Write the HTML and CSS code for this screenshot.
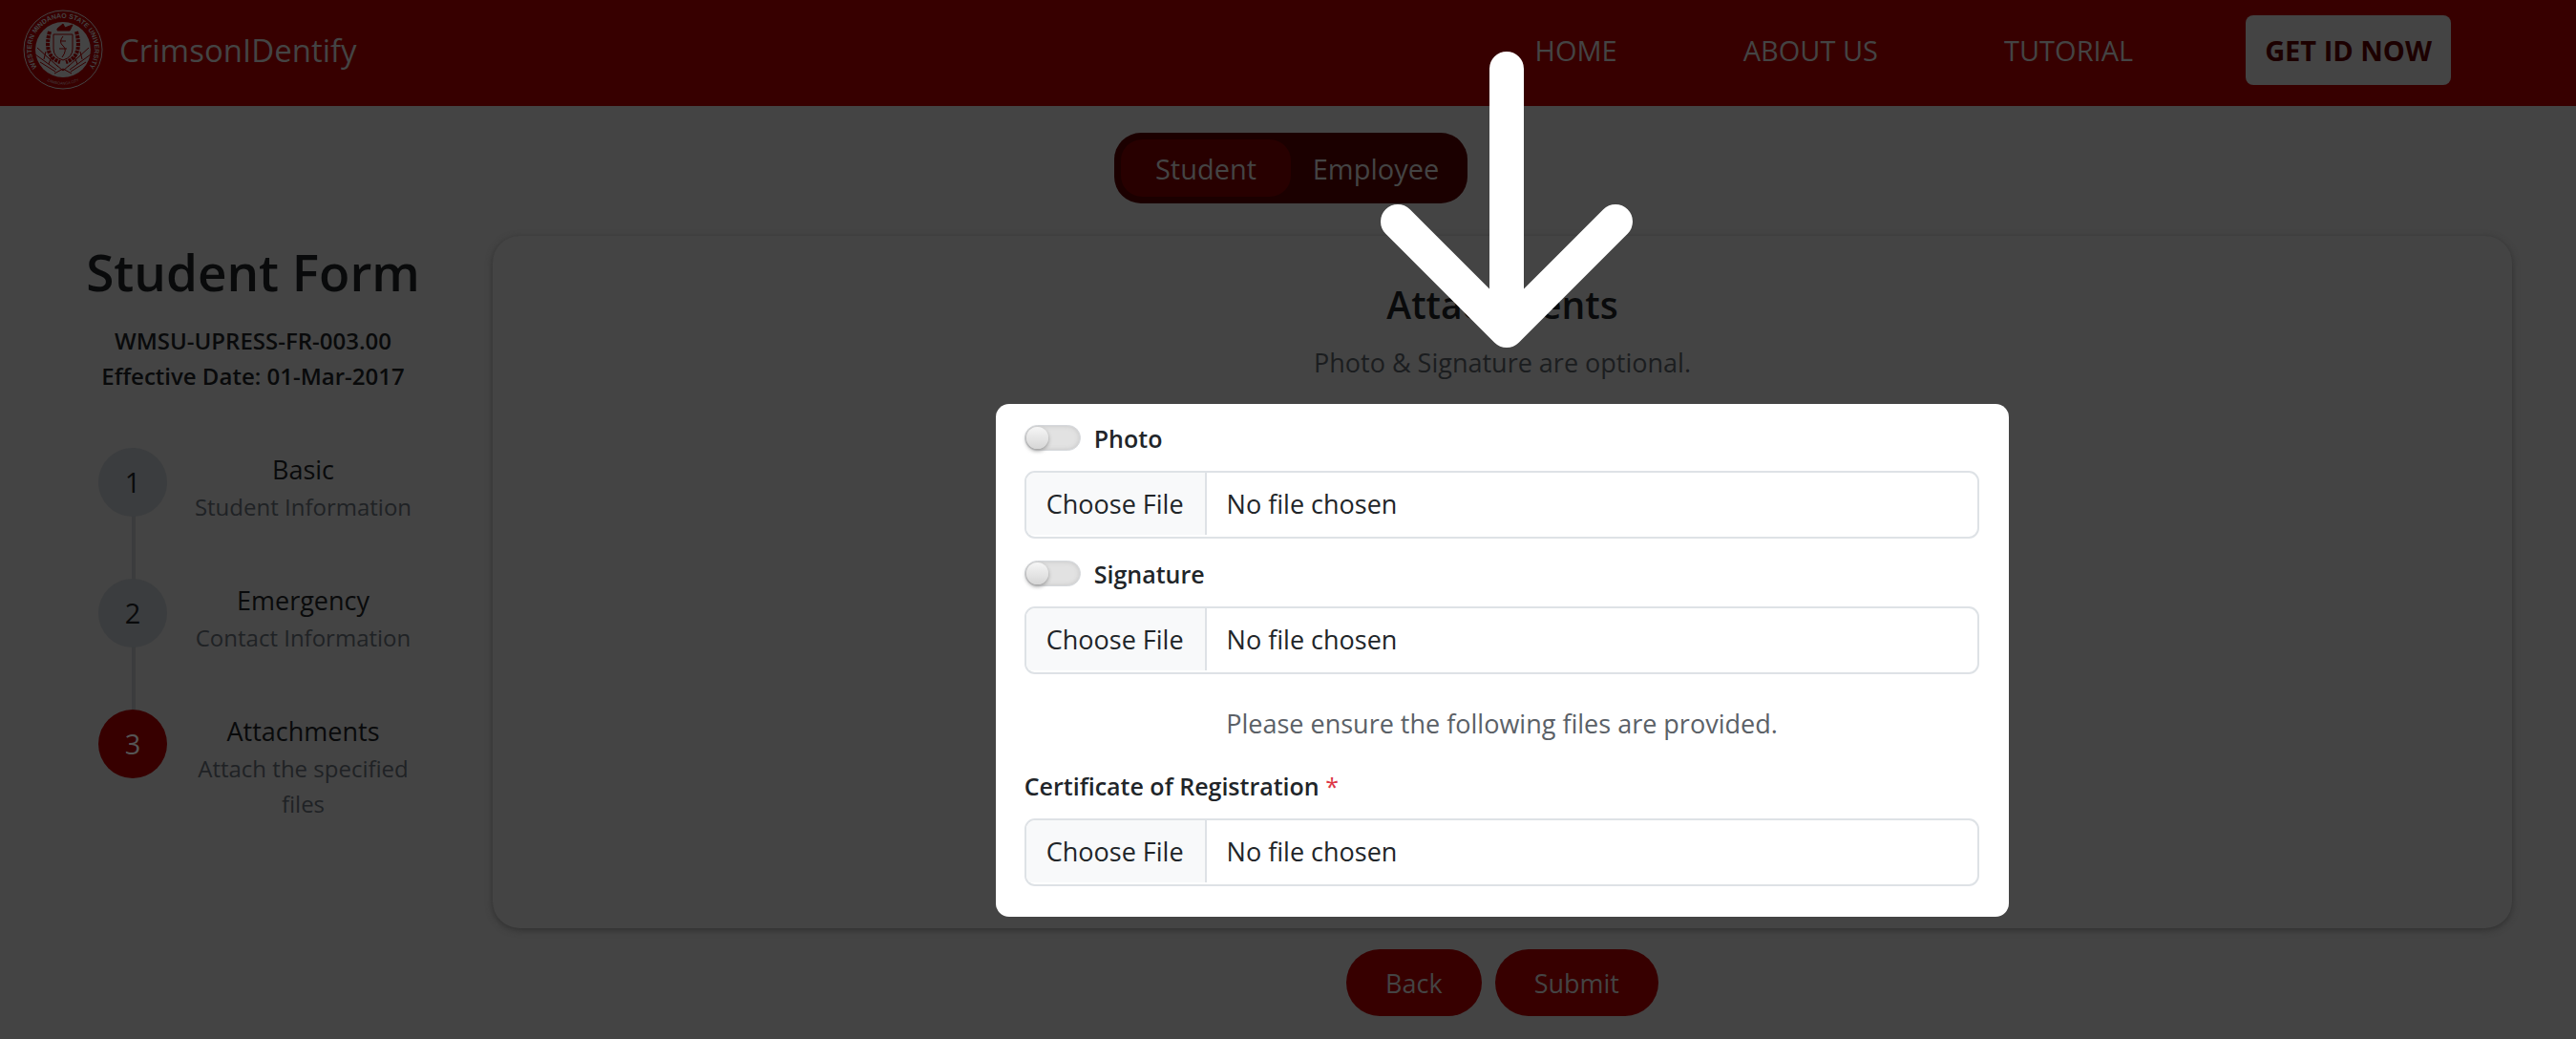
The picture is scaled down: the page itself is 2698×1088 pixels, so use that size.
FILE: index.html
```html
<!DOCTYPE html>
<html lang="en">
<head>
<meta charset="utf-8">
<meta name="viewport" content="width=device-width, initial-scale=1">
<title>CrimsonIDentify</title>
<link rel="stylesheet" href="styles.css">
</head>
<body>
<header class="navbar">
  <a class="brand" href="#">
    <svg class="seal" viewBox="0 0 84 84" aria-hidden="true">
      <defs>
        <path id="ring-top" d="M22 68A33 33 0 1 1 62 68"/>
        <path id="ring-bottom" d="M22 73A38 38 0 0 0 62 73"/>
      </defs>
      <circle class="seal-line" cx="42" cy="42" r="41"/>
      <circle class="seal-fill" cx="42" cy="42" r="29"/>
      <text class="seal-text"><textPath href="#ring-top" startOffset="50%">WESTERN MINDANAO STATE UNIVERSITY</textPath></text>
      <text class="seal-small"><textPath href="#ring-bottom" startOffset="50%">ZAMBOANGA CITY</textPath></text>
      <g class="seal-ink">
        <path d="M36 20l6-5 2 4 8-3-3 6H36z"/>
        <path d="M32 26h20v15q0 9-10 12-10-3-10-12z" fill="none"/>
        <path d="M42 28q-5 6 0 10t-1 12M39 33h6M38 41h8" fill="none"/>
        <path class="wreath" d="M28 23q-7 26 11 32M56 23q7 26-11 32" fill="none"/>
        <path d="M15 40l22 20M13 47l22 16M18 55l16 10M69 40l-22 20M71 47l-22 16M66 55l-16 10M24 44l-2 8M30 49l-3 8M60 44l2 8M54 49l3 8M35 58l7 6 7-6M33 67l9-5 9 5" fill="none"/>
      </g>
    </svg>
    <span>CrimsonIDentify</span>
  </a>
  <nav class="menu">
    <a href="#">HOME</a>
    <a href="#">ABOUT US</a>
    <a href="#">TUTORIAL</a>
    <a class="cta" href="#">GET ID NOW</a>
  </nav>
</header>

<div class="switcher">
  <button class="tab tab-active" type="button">Student</button>
  <button class="tab" type="button">Employee</button>
</div>

<div class="layout">
  <aside class="sidebar">
    <h1>Student Form</h1>
    <p class="form-code">WMSU-UPRESS-FR-003.00<br>Effective Date: 01-Mar-2017</p>
    <ol class="steps">
      <li class="step"><span class="dot">1</span><div class="step-text"><h2>Basic</h2><p>Student Information</p></div></li>
      <li class="step"><span class="dot">2</span><div class="step-text"><h2>Emergency</h2><p>Contact Information</p></div></li>
      <li class="step step-active"><span class="dot">3</span><div class="step-text"><h2>Attachments</h2><p>Attach the specified files</p></div></li>
    </ol>
  </aside>
  <form class="main">
    <section class="card">
      <svg class="pointer" viewBox="0 0 264 310" aria-hidden="true"><path d="M132 18V292M18 178L132 292L246 178"/></svg>
      <h2 class="card-title">Attachments</h2>
      <p class="card-note">Photo &amp; Signature are optional.</p>
      <div class="panel">
        <div class="label-row"><input class="toggle" type="checkbox" id="has-photo"><label for="has-photo">Photo</label></div>
        <input class="file" type="file" aria-label="Photo file">
        <div class="label-row"><input class="toggle" type="checkbox" id="has-signature"><label for="has-signature">Signature</label></div>
        <input class="file" type="file" aria-label="Signature file">
        <p class="panel-note">Please ensure the following files are provided.</p>
        <div class="label-row"><label for="cor">Certificate of Registration <span class="required">*</span></label></div>
        <input class="file" type="file" id="cor">
      </div>
    </section>
    <div class="actions">
      <button class="action" type="button">Back</button>
      <button class="action" type="submit">Submit</button>
    </div>
  </form>
</div>
</body>
</html>
```
FILE: styles.css
```css
* { box-sizing: border-box; }

body {
  margin: 0;
  background: #444;
  color: #090a0b;
  font-family: "Open Sans", "Noto Sans", sans-serif;
  font-size: 27px;
}

h1, h2, p, ol { margin: 0; padding: 0; font-weight: 400; }
button, input { font: inherit; }
a { color: inherit; text-decoration: none; }

.navbar {
  display: flex;
  align-items: center;
  justify-content: space-between;
  height: 111px;
  padding: 0 131px 7px 24px;
  background: #370000;
  color: #444;
}
.brand { display: flex; align-items: center; gap: 17px; font-size: 33px; }
.seal { width: 84px; height: 84px; }
.seal-line { fill: none; stroke: #444; stroke-width: 1; }
.seal-fill { fill: #444; }
.seal-text { fill: #444; font-family: "Liberation Sans", sans-serif; font-size: 7px; font-weight: 700; text-anchor: middle; }
.seal-small { fill: #444; font-size: 4px; text-anchor: middle; }
.seal-ink { fill: #370000; stroke: #370000; stroke-width: 1; }
.wreath { stroke-width: 4; stroke-dasharray: 3 1; }
.menu { display: flex; align-items: center; gap: 132px; font-size: 29px; }
.cta {
  margin-left: -14px;
  padding: 14px 20px;
  border-radius: 8px;
  background: #444;
  color: #1c0000;
  font-weight: 700;
  line-height: 45px;
}

.switcher {
  display: flex;
  width: 370px;
  height: 74px;
  margin: 28px auto 34px calc(50% - 182px);
  padding: 7px;
  border-radius: 28px;
  background: #1b0000;
}
.tab {
  flex: 1;
  padding: 0;
  border: 0;
  border-radius: 22px;
  background: none;
  color: #444;
  font-size: 29px;
}
.tab-active { background: #280000; }

.layout { display: grid; grid-template-columns: 516px 1fr; padding-right: 67px; }

.sidebar { padding: 0 82px 0 96px; text-align: center; }
.sidebar h1 { margin: 0 -20px; font-size: 53px; font-weight: 600; line-height: 76px; }
.form-code { margin-top: 15px; font-size: 24px; font-weight: 600; line-height: 37px; white-space: nowrap; }
.steps { margin-top: 57px; list-style: none; }
.step { display: flex; gap: 26px; height: 137px; padding-left: 7px; background: linear-gradient(#3b3c3d, #3b3c3d) 42px 0 / 4px 100% no-repeat; }
.step-active { background: none; }
.dot {
  flex: none;
  width: 72px;
  height: 72px;
  border-radius: 50%;
  background: #3b3d3f;
  font-size: 29px;
  line-height: 72px;
}
.step-active .dot { background: #370000; color: #555; }
.step-text { flex: 1; padding-top: 3px; }
.step h2 { font-size: 27px; line-height: 40px; }
.step p { color: #1f2225; font-size: 24px; line-height: 37px; }

.card {
  position: relative;
  display: flex;
  flex-direction: column;
  align-items: center;
  padding: 44px 0 12px;
  border-radius: 28px;
  background: #444;
  box-shadow: 0 2px 7px #303030;
}
.card-title { font-size: 39px; font-weight: 600; line-height: 56px; }
.card-note { margin: 12px 0 22px; color: #1b1d1f; line-height: 42px; }
.pointer { position: absolute; top: -193px; left: calc(50% - 128px); width: 264px; height: 310px; }
.pointer path { fill: none; stroke: #fff; stroke-width: 36; stroke-linecap: round; stroke-linejoin: round; }

.panel {
  width: calc(50% + 4px);
  padding: 17px 31px 32px 30px;
  border-radius: 14px;
  background: #fff;
  color: #212529;
}
.label-row { display: flex; align-items: center; gap: 14px; height: 37px; font-size: 25px; font-weight: 600; }
.required { color: #dc3545; font-weight: 400; }
.toggle {
  appearance: none;
  width: 59px;
  height: 27px;
  margin: 0;
  border: 1px solid #d5d8dc;
  border-radius: 14px;
  background: #e2e2e2;
  box-shadow: inset 0 0 5px #c4c4c4;
}
.toggle::before {
  content: "";
  display: block;
  width: 23px;
  height: 23px;
  margin: 1px;
  border-radius: 50%;
  background: linear-gradient(#f6f6f6, #d6d6d6);
  box-shadow: 0 2px 4px #999;
}
.file {
  display: block;
  width: 100%;
  height: 71px;
  margin: 16px 0 18px;
  border: 2px solid #dee2e6;
  border-radius: 11px;
  color: #212529;
  line-height: 42px;
  overflow: hidden;
}
.file::file-selector-button {
  height: 65px;
  margin: 0 21px 0 0;
  padding: 0 22px 0 21px;
  border: 0;
  border-right: 2px solid #dee2e6;
  background: #f8f9fa;
  color: #212529;
  font: inherit;
}
.panel-note { margin: 31px 0 25px; color: #5b6167; line-height: 42px; text-align: center; }
.panel .file:last-child { margin-bottom: 0; }

.actions { display: flex; justify-content: center; gap: 14px; padding: 22px 0 24px; }
.action {
  height: 70px;
  padding: 0 41px;
  border: 0;
  border-radius: 35px;
  background: #370000;
  color: #444;
}
```
